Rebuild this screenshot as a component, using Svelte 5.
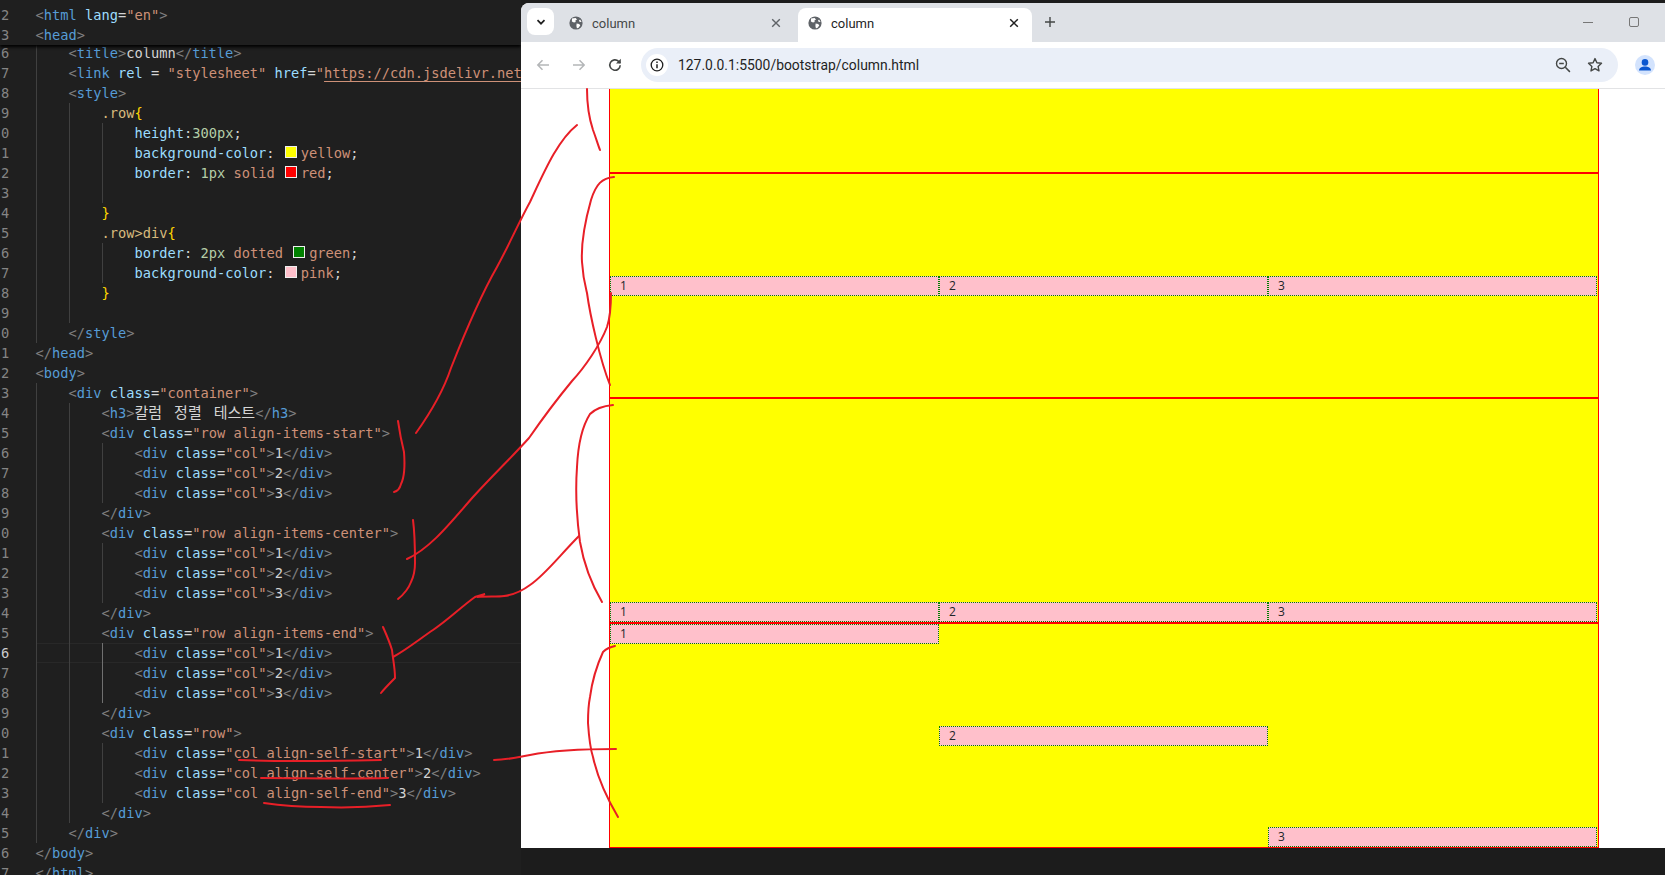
<script>
	// token helpers: [class, text]
	const p = (t) => ['pun', t];
	const open = (name, cls) =>
		cls
			? [p('<'), ['tag', name], ['txt', ' '], ['atn', 'class'], ['txt', '='], ['str', `"${cls}"`], p('>')]
			: [p('<'), ['tag', name], p('>')];
	const close = (name) => [p('</'), ['tag', name], p('>')];
	const col = (cls, n) => [...open('div', cls), ['txt', n], ...close('div')];
	const prop = (name, rest) => [['atn', name], ['txt', ':'], ...rest];
	const swatch = (color) => ['swatch', color];

	const lines = [];
	const add = (n, indent, tokens = []) => lines.push({ n, indent, tokens });

	add(6, 1, [...open('title'), ['txt', 'column'], ...close('title')]);
	add(7, 1, [
		p('<'), ['tag', 'link'], ['txt', ' '], ['atn', 'rel'], ['txt', ' = '], ['str', '"stylesheet"'], ['txt', ' '],
		['atn', 'href'], ['txt', '='], ['str', '"'], ['lnk', 'https://cdn.jsdelivr.net/npm/bootstrap@5.3.3/dist/css/bootstrap.min.css']
	]);
	add(8, 1, open('style'));
	add(9, 2, [['sel', '.row'], ['brc', '{']]);
	add(10, 3, prop('height', [['num', '300px'], ['txt', ';']]));
	add(11, 3, prop('background-color', [['txt', ' '], swatch('yellow'), ['str', 'yellow'], ['txt', ';']]));
	add(12, 3, prop('border', [['txt', ' '], ['num', '1px'], ['str', ' solid '], swatch('red'), ['str', 'red'], ['txt', ';']]));
	add(13, 3);
	add(14, 2, [['brc', '}']]);
	add(15, 2, [['sel', '.row>div'], ['brc', '{']]);
	add(16, 3, prop('border', [['txt', ' '], ['num', '2px'], ['str', ' dotted '], swatch('green'), ['str', 'green'], ['txt', ';']]));
	add(17, 3, prop('background-color', [['txt', ' '], swatch('pink'), ['str', 'pink'], ['txt', ';']]));
	add(18, 2, [['brc', '}']]);
	add(19, 2);
	add(20, 1, close('style'));
	add(21, 0, close('head'));
	add(22, 0, open('body'));
	add(23, 1, open('div', 'container'));
	add(24, 2, [...open('h3'), ['ko', '칼럼 정렬 테스트'], ...close('h3')]);
	add(25, 2, open('div', 'row align-items-start'));
	add(26, 3, col('col', '1'));
	add(27, 3, col('col', '2'));
	add(28, 3, col('col', '3'));
	add(29, 2, close('div'));
	add(30, 2, open('div', 'row align-items-center'));
	add(31, 3, col('col', '1'));
	add(32, 3, col('col', '2'));
	add(33, 3, col('col', '3'));
	add(34, 2, close('div'));
	add(35, 2, open('div', 'row align-items-end'));
	add(36, 3, col('col', '1'));
	add(37, 3, col('col', '2'));
	add(38, 3, col('col', '3'));
	add(39, 2, close('div'));
	add(40, 2, open('div', 'row'));
	add(41, 3, col('col align-self-start', '1'));
	add(42, 3, col('col align-self-center', '2'));
	add(43, 3, col('col align-self-end', '3'));
	add(44, 2, close('div'));
	add(45, 1, close('div'));
	add(46, 0, close('body'));
	add(47, 0, close('html'));

	const sticky = [
		{ n: 2, tokens: [p('<'), ['tag', 'html'], ['txt', ' '], ['atn', 'lang'], ['txt', '='], ['str', '"en"'], p('>')] },
		{ n: 3, tokens: open('head') }
	];

	const ACTIVE_LINE = 36;
	const activeGuide = (l, i) => i === 2 && l.n >= 36 && l.n <= 38;

	const cols = ['1', '2', '3'];
	const ink = [
		'M416 433C431 412 443 392 451 368C464 335 481 295 497 267C509 245 519 222 530 202C545 170 558 140 577 125',
		'M587 89C587 102 589 118 593 130C596 138 598 145 600 150',
		'M614 177C602 178 596 184 591 200C584 225 581 245 582 262C583 278 585 285 587 293C590 315 600 360 610 385',
		'M407 559C431 548 451 522 473 497C496 472 511 458 529 438C545 415 558 398 572 381C585 367 600 345 607 327C611 315 611 303 611 293',
		'M398 421C399 428 401 440 404 452C405 465 404 478 401 484C400 488 398 491 394 492',
		'M413 520C415 535 415 552 415 563C415 572 413 578 411 582C408 590 403 595 398 599',
		'M383 627C387 636 390 643 392 650C393 660 395 668 395 678C389 684 385 688 381 693',
		'M393 657C406 650 421 638 433 630C448 620 461 607 475 597L485 594L477 597C487 596 497 597 504 596C512 595 522 591 530 585C545 575 560 555 579 536',
		'M613 405C603 406 596 408 590 414C583 425 578 445 577 467C575 495 577 520 580 542C584 565 592 585 602 602',
		'M494 760C507 760 519 757 530 755C550 751 585 749 616 749',
		'M615 646C610 647 606 649 603 652C597 665 592 682 590 697C588 707 588 715 588 723C589 738 590 748 593 757C598 780 608 800 618 817',
		'M239 760C284 762 335 761 381 760',
		'M261 778C304 778 350 779 388 778',
		'M264 803C284 806 304 807 321 807C345 808 370 807 390 805'
	];
</script>

<div class="screen">
	<section class="editor">
		<div class="sticky">
			{#each sticky as l}
				<div class="line">
					<span class="gutter">{l.n % 10}</span>
					<span class="code">{#each l.tokens as t}<span class={t[0]}>{t[1]}</span>{/each}</span>
				</div>
			{/each}
		</div>
		<div class="lines">
			{#each lines as l}
				<div class="line" class:active={l.n === ACTIVE_LINE}>
					<span class="gutter">{l.n % 10}</span>
					<span class="code">
						{#each Array(l.indent) as _, i}<span class="guide" class:on={activeGuide(l, i)}></span>{/each}{#each l.tokens as t}{#if t[0] === 'swatch'}<i class="swatch" style="background:{t[1]}"></i>{:else}<span class={t[0]}>{t[1]}</span>{/if}{/each}
					</span>
				</div>
			{/each}
		</div>
	</section>

	<section class="browser">
		<header class="tabs">
			<button class="tab-search" aria-label="Search tabs">
				<svg width="12" height="12" viewBox="0 0 12 12"><path d="M2.5 4.2 6 7.7l3.5-3.5" fill="none" stroke="#1f1f1f" stroke-width="1.7" /></svg>
			</button>
			<div class="tab">
				<svg class="globe" width="14" height="14" viewBox="0 0 14 14"><circle cx="7" cy="7" r="6.6" fill="#5f6368" /><path d="M3 2.6 6.6 1.9 8 3.4 6.4 4.6 6.7 6 5 6.6 2.9 5.6ZM7.6 7.4l2.6.6 1.1 1.4-2 2.6-1.4.3-.5-2.4ZM11 3.4l1.6 2.4-1.7.3-1-1.3Z" fill="#fff" /></svg>
				<span class="tab-title">column</span>
				<svg class="tab-x" width="10" height="10" viewBox="0 0 10 10"><path d="M1.2 1.2l7.6 7.6M8.8 1.2 1.2 8.8" stroke="#5f6368" stroke-width="1.4" /></svg>
			</div>
			<div class="tab current">
				<svg class="globe" width="14" height="14" viewBox="0 0 14 14"><circle cx="7" cy="7" r="6.6" fill="#5f6368" /><path d="M3 2.6 6.6 1.9 8 3.4 6.4 4.6 6.7 6 5 6.6 2.9 5.6ZM7.6 7.4l2.6.6 1.1 1.4-2 2.6-1.4.3-.5-2.4ZM11 3.4l1.6 2.4-1.7.3-1-1.3Z" fill="#fff" /></svg>
				<span class="tab-title">column</span>
				<svg class="tab-x" width="10" height="10" viewBox="0 0 10 10"><path d="M1.2 1.2l7.6 7.6M8.8 1.2 1.2 8.8" stroke="#1f1f1f" stroke-width="1.5" /></svg>
			</div>
			<svg class="plus" width="12" height="12" viewBox="0 0 12 12"><path d="M6 1v10M1 6h10" stroke="#444746" stroke-width="1.4" /></svg>
			<div class="win-controls">
				<svg width="12" height="12" viewBox="0 0 12 12"><path d="M1 6.5h10" stroke="#777" stroke-width="1" /></svg>
				<svg width="12" height="12" viewBox="0 0 12 12"><rect x="1.5" y="1.5" width="9" height="9" rx="1.5" fill="none" stroke="#777" /></svg>
			</div>
		</header>

		<div class="toolbar">
			<svg width="16" height="16" viewBox="0 0 16 16"><path d="M14 8H3M7.5 3.2 2.8 8l4.7 4.8" fill="none" stroke="#b4b6b8" stroke-width="1.5" /></svg>
			<svg width="16" height="16" viewBox="0 0 16 16"><path d="M2 8h11M8.5 3.2 13.2 8l-4.7 4.8" fill="none" stroke="#b4b6b8" stroke-width="1.5" /></svg>
			<svg width="16" height="16" viewBox="0 0 16 16"><path d="M13.2 8.2A5.2 5.2 0 1 1 11.6 4.3L13.2 6" fill="none" stroke="#444746" stroke-width="1.6" /><path d="M13.8 1.8v4.8H9z" fill="#444746" /></svg>
			<div class="omnibox">
				<span class="info">
					<svg width="14" height="14" viewBox="0 0 14 14"><circle cx="7" cy="7" r="5.8" fill="none" stroke="#1f1f1f" stroke-width="1.3" /><path d="M7 6.2v4M7 3.6v1.5" stroke="#1f1f1f" stroke-width="1.5" /></svg>
				</span>
				<span class="url">127.0.0.1:5500/bootstrap/column.html</span>
				<svg width="16" height="16" viewBox="0 0 16 16"><circle cx="6.5" cy="6.5" r="5" fill="none" stroke="#444746" stroke-width="1.4" /><path d="M4.2 6.5h4.6M10.3 10.3l4.6 4.6" stroke="#444746" stroke-width="1.5" /></svg>
				<svg width="16" height="16" viewBox="0 0 16 16"><path d="M8 1.6l1.9 4.2 4.6.5-3.4 3.1.9 4.5L8 11.6l-4 2.3.9-4.5-3.4-3.1 4.6-.5z" fill="none" stroke="#444746" stroke-width="1.4" stroke-linejoin="round" /></svg>
			</div>
			<span class="avatar">
				<svg width="20" height="20" viewBox="0 0 20 20"><circle cx="10" cy="7.4" r="3.3" fill="#0b57d0" /><path d="M4 15.6c0-2.7 3-4.1 6-4.1s6 1.4 6 4.1z" fill="#0b57d0" /></svg>
			</span>
		</div>

		<main class="page">
			<div class="container">
				<div class="row stub"></div>
				<div class="row items-center">
					{#each cols as c}<div class="col">{c}</div>{/each}
				</div>
				<div class="row items-end">
					{#each cols as c}<div class="col">{c}</div>{/each}
				</div>
				<div class="row">
					<div class="col self-start">1</div>
					<div class="col self-center">2</div>
					<div class="col self-end">3</div>
				</div>
			</div>
		</main>
	</section>

	<div class="bottom-gap"></div>

	<svg class="ink" width="1665" height="875" viewBox="0 0 1665 875">
		{#each ink as d}<path {d} />{/each}
	</svg>
</div>

<style>
	:global(body) {
		margin: 0;
		background: #1c1c1c;
		overflow: hidden;
	}

	.screen {
		position: relative;
		width: 1665px;
		height: 875px;
		display: grid;
		grid-template-columns: 521px 1144px;
		grid-template-rows: 848px 27px;
		overflow: hidden;
	}

	/* editor */
	.editor {
		grid-row: 1 / 3;
		background: #1f1f1f;
		overflow: hidden;
		font-family: 'DejaVu Sans Mono', 'Noto Sans CJK KR', monospace;
		font-size: 13.7px;
		color: #d4d4d4;
	}

	.sticky {
		position: relative;
		z-index: 1;
		height: 40px;
		padding-top: 5px;
		background: #1f1f1f;
		box-shadow: 0 2px 3px #000;
	}

	.lines {
		margin-top: -2px;
	}

	.line {
		display: flex;
		height: 20px;
		line-height: 20px;
		white-space: pre;
	}

	.gutter {
		width: 35.5px;
		flex: none;
		padding-left: 1px;
		box-sizing: border-box;
		color: #858585;
	}

	.code {
		display: flex;
		flex: 1;
		box-sizing: border-box;
	}

	.active .gutter {
		color: #cccccc;
	}

	.active .code {
		box-shadow: inset 0 1px #282828, inset 0 -1px #282828;
	}

	.guide {
		width: 33px;
		flex: none;
		box-sizing: border-box;
		border-left: 1px solid #404040;
	}

	.guide.on {
		border-left-color: #707070;
	}

	.swatch {
		width: 10px;
		height: 10px;
		flex: none;
		margin: 3px 4px 0 2px;
		border: 1px solid #eee;
	}

	.pun { color: #808080; }
	.tag { color: #569cd6; }
	.atn { color: #9cdcfe; }
	.str { color: #ce9178; }
	.num { color: #b5cea8; }
	.sel { color: #d7ba7d; }
	.brc { color: #ffd700; }
	.txt { color: #d4d4d4; }
	.ko {
		color: #d4d4d4;
		font-size: 15px;
		word-spacing: 3px;
	}
	.lnk {
		color: #ce9178;
		text-decoration: underline;
		text-underline-offset: 3px;
	}

	/* browser window */
	.browser {
		display: flex;
		flex-direction: column;
		background: #fff;
		border-top-left-radius: 8px;
		overflow: hidden;
		margin-top: 3px;
		font-family: Roboto, 'Noto Sans', sans-serif;
	}

	.bottom-gap {
		background: #1c1c1c;
	}

	.tabs {
		height: 39px;
		flex: none;
		display: flex;
		align-items: flex-end;
		background: #dee1e6;
		padding-left: 6px;
		box-sizing: border-box;
	}

	.tab-search {
		width: 27px;
		height: 27px;
		margin-bottom: 7px;
		padding: 0;
		border: 0;
		border-radius: 8px;
		background: #fff;
		display: flex;
		align-items: center;
		justify-content: center;
	}

	.tab {
		width: 244px;
		height: 34px;
		box-sizing: border-box;
		padding: 0 17px 4px 15px;
		display: flex;
		align-items: center;
		font-size: 13px;
		color: #444746;
	}

	.tab.current {
		width: 234px;
		padding: 0 13px 4px 10px;
		background: #fff;
		border-radius: 8px 8px 0 0;
		color: #1f1f1f;
	}

	.globe {
		margin-right: 9px;
	}

	.tab-title {
		flex: 1;
	}

	.plus {
		margin: 0 0 14px 12px;
	}

	.win-controls {
		margin-left: auto;
		margin-right: 25px;
		margin-bottom: 14px;
		display: flex;
		gap: 34px;
	}

	.toolbar {
		height: 47px;
		flex: none;
		box-sizing: border-box;
		display: flex;
		align-items: center;
		gap: 20px;
		padding-left: 14px;
		border-bottom: 1px solid #e2e3e5;
	}

	.omnibox {
		width: 977px;
		height: 34px;
		margin-left: -2px;
		box-sizing: border-box;
		padding: 0 15px 0 5px;
		display: flex;
		align-items: center;
		gap: 16px;
		border-radius: 17px;
		background: #eaeff8;
	}

	.info {
		width: 22px;
		height: 22px;
		border-radius: 50%;
		background: #fff;
		display: flex;
		align-items: center;
		justify-content: center;
	}

	.url {
		flex: 1;
		margin-left: -6px;
		font-size: 13.9px;
		color: #1f1f1f;
	}

	.avatar {
		width: 20px;
		height: 20px;
		margin-left: -3px;
		border-radius: 50%;
		background: #d3e3fd;
	}

	/* page content */
	.page {
		flex: 1;
		min-height: 0;
		padding-left: 88px;
		overflow: hidden;
	}

	.container {
		width: 990px;
		font-family: 'Open Sans', 'Noto Sans', sans-serif;
		font-size: 12px;
		line-height: 18px;
		color: #212529;
	}

	.row {
		height: 225px;
		box-sizing: border-box;
		display: flex;
		padding-right: 1px;
		background: #ff0;
		border: 1px solid #f00;
	}

	.stub {
		height: 84px;
		border-top: 0;
	}

	.items-center { align-items: center; }
	.items-end { align-items: flex-end; }

	.col {
		flex: 1;
		box-sizing: border-box;
		height: 20px;
		padding-left: 9px;
		background: pink;
		border: 1px dotted green;
	}

	.self-start { align-self: flex-start; }
	.self-center { align-self: center; }
	.self-end { align-self: flex-end; }

	/* hand-drawn pen strokes over the whole screenshot */
	.ink {
		position: absolute;
		left: 0;
		top: 0;
		pointer-events: none;
		fill: none;
		stroke: #e81f27;
		stroke-width: 2;
		stroke-linecap: round;
	}
</style>
